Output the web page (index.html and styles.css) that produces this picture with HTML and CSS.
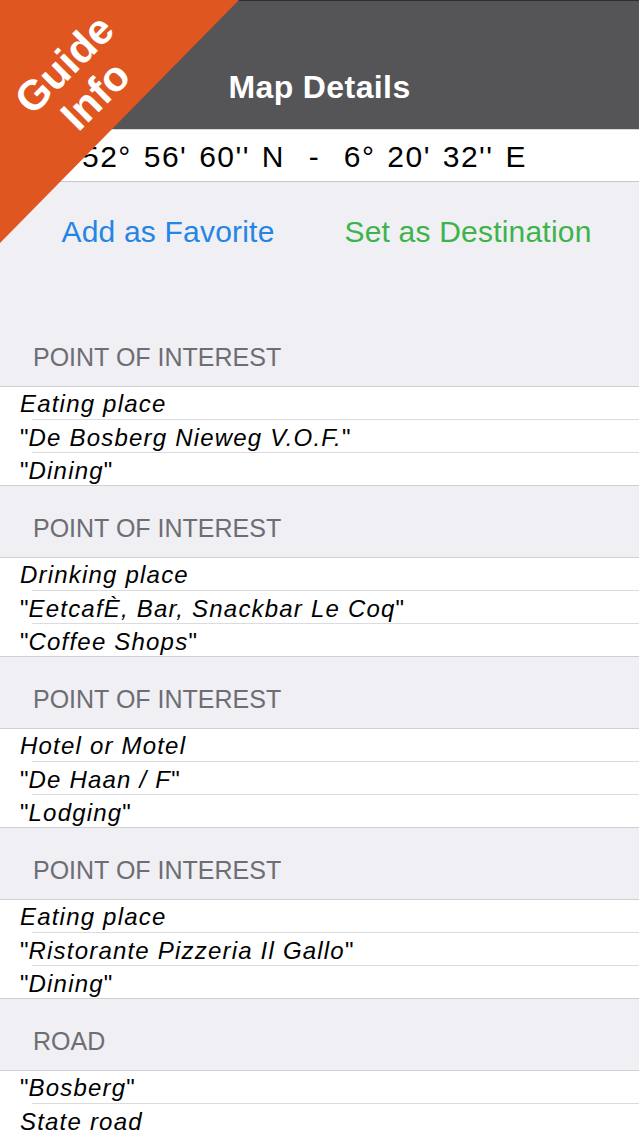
FILE: index.html
```html
<!DOCTYPE html>
<html>
<head>
<meta charset="utf-8">
<link rel="stylesheet" href="styles.css">
</head>
<body>
<div class="screen">
  <header class="navbar">
    <h1 class="title">Map Details</h1>
  </header>
  <div class="coords">52° 56' 60'' N&nbsp; - &nbsp;6° 20' 32'' E</div>
  <div class="actions">
    <a class="action fav">Add as Favorite</a>
    <a class="action dest">Set as Destination</a>
  </div>

  <section class="section">
    <div class="sec-head">POINT OF INTEREST</div>
    <ul class="group">
      <li class="row">Eating place</li>
      <li class="row"><span class="q">"</span>De Bosberg Nieweg V.O.F.<span class="q">"</span></li>
      <li class="row"><span class="q">"</span>Dining<span class="q">"</span></li>
    </ul>
  </section>

  <section class="section">
    <div class="sec-head">POINT OF INTEREST</div>
    <ul class="group">
      <li class="row">Drinking place</li>
      <li class="row"><span class="q">"</span>EetcafÈ, Bar, Snackbar Le Coq<span class="q">"</span></li>
      <li class="row"><span class="q">"</span>Coffee Shops<span class="q">"</span></li>
    </ul>
  </section>

  <section class="section">
    <div class="sec-head">POINT OF INTEREST</div>
    <ul class="group">
      <li class="row">Hotel or Motel</li>
      <li class="row"><span class="q">"</span>De Haan / F<span class="q">"</span></li>
      <li class="row"><span class="q">"</span>Lodging<span class="q">"</span></li>
    </ul>
  </section>

  <section class="section">
    <div class="sec-head">POINT OF INTEREST</div>
    <ul class="group">
      <li class="row">Eating place</li>
      <li class="row"><span class="q">"</span>Ristorante Pizzeria Il Gallo<span class="q">"</span></li>
      <li class="row"><span class="q">"</span>Dining<span class="q">"</span></li>
    </ul>
  </section>

  <section class="section">
    <div class="sec-head">ROAD</div>
    <ul class="group">
      <li class="row"><span class="q">"</span>Bosberg<span class="q">"</span></li>
      <li class="row">State road</li>
    </ul>
  </section>

  <div class="badge">
    <div class="badge-text">Guide<br>Info</div>
  </div>
</div>
</body>
</html>
```

FILE: styles.css
```css
* { box-sizing: border-box; }
html, body {
  margin: 0;
  padding: 0;
  background: #efeff4;
  font-family: "Liberation Sans", Arial, sans-serif;
  overflow: hidden;
}
.screen {
  position: relative;
  width: 639px;
  height: 1136px;
  overflow: hidden;
  background: #efeff4;
}
.navbar {
  height: 129px;
  background: #555457;
  border-top: 1px solid #2e2e30;
  padding-top: 40px;
  display: flex;
  align-items: center;
  justify-content: center;
}
.title {
  margin: 0;
  color: #ffffff;
  font-size: 32px;
  font-weight: bold;
  letter-spacing: 0.4px;
  line-height: 40px;
  padding-top: 4px;
}
.coords {
  height: 53px;
  background: #ffffff;
  border-top: 1px solid #d9d9dd;
  border-bottom: 1px solid #c8c7cc;
  padding: 2px 0 0 82px;
  font-size: 30px;
  line-height: 50px;
  color: #000;
  letter-spacing: 1.5px;
  word-spacing: 2px;
  white-space: nowrap;
}
.actions {
  display: grid;
  grid-template-columns: 300px 300px;
  padding: 32px 21px 65px 18px;
}
.action {
  justify-self: center;
  font-size: 30px;
  line-height: 36px;
  letter-spacing: 0.2px;
}
.fav { color: #2585e4; }
.dest { color: #3db44a; }
.section { display: block; }
.sec-head {
  height: 71px;
  padding: 0 0 14px 33px;
  display: flex;
  align-items: flex-end;
  color: #6d6d72;
  font-size: 25px;
  line-height: 30px;
}
.group {
  list-style: none;
  margin: 0;
  padding: 0;
  background: #ffffff;
  border-top: 1px solid #d0cfd4;
  border-bottom: 1px solid #d0cfd4;
}
.row {
  position: relative;
  height: 33px;
  padding: 2px 0 0 20px;
  font-size: 24px;
  font-style: italic;
  letter-spacing: 1.2px;
  line-height: 31px;
  color: #000;
  white-space: nowrap;
}
.row:first-child { height: 32px; padding-top: 2px; line-height: 30px; }
.row + .row { border-top: 1px solid #dcdce0; }
.row + .row::before {
  content: "";
  position: absolute;
  left: 0;
  top: -1px;
  width: 32px;
  height: 1px;
  background: #ffffff;
}
.q { font-style: normal; letter-spacing: 0; }
.badge {
  position: absolute;
  left: 0;
  top: 0;
  width: 240px;
  height: 244px;
  background: #df5620;
  clip-path: polygon(0 0, 239px 0, 0 243px);
}
.badge-text {
  position: absolute;
  left: 80px;
  top: 80px;
  transform: translate(-50%, -50%) rotate(-45deg);
  color: #ffffff;
  font-size: 42px;
  font-weight: bold;
  line-height: 44px;
  text-align: center;
  white-space: nowrap;
}
```
